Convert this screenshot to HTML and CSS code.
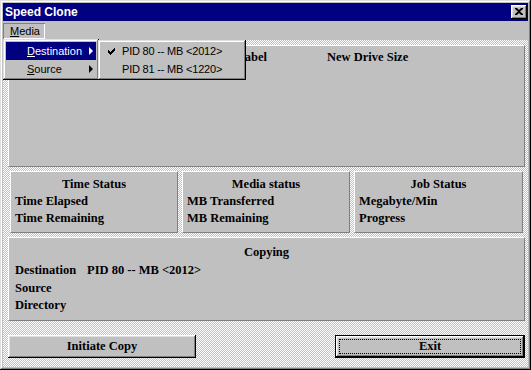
FILE: index.html
```html
<!DOCTYPE html>
<html>
<head>
<meta charset="utf-8">
<link rel="stylesheet" href="styles.css">
</head>
<body>
<div class="window">
  <div class="titlebar">
    <span class="title">Speed Clone</span>
    <span class="close-btn"><svg width="8" height="7" viewBox="0 0 8 7"><path d="M0 0h2l2 2 2-2h2v1L5 3.5 8 6v1H6L4 5 2 7H0V6l3-2.5L0 1z" fill="#000"/></svg></span>
  </div>
  <div class="menubar">
    <span class="menu-top pressed"><u>M</u>edia</span>
  </div>
  <div class="client">
    <div class="panel drives">
      <div class="drive-header">
        <span class="col-label">Label</span>
        <span class="col-size">New Drive Size</span>
      </div>
    </div>
    <div class="status-row">
      <div class="panel status">
        <div class="heading">Time Status</div>
        <div class="line">Time Elapsed</div>
        <div class="line">Time Remaining</div>
      </div>
      <div class="panel status">
        <div class="heading">Media status</div>
        <div class="line">MB Transferred</div>
        <div class="line">MB Remaining</div>
      </div>
      <div class="panel status wide">
        <div class="heading">Job Status</div>
        <div class="line">Megabyte/Min</div>
        <div class="line">Progress</div>
      </div>
    </div>
    <div class="panel copying">
      <div class="heading">Copying</div>
      <div class="line"><span class="key">Destination</span><span>PID 80 -- MB &lt;2012&gt;</span></div>
      <div class="line">Source</div>
      <div class="line">Directory</div>
    </div>
    <div class="buttons">
      <button class="btn initiate">Initiate Copy</button>
      <button class="btn default"><span class="focus">Exit</span></button>
    </div>
  </div>

  <div class="popup menu-main">
    <div class="item selected"><span class="label"><u>D</u>estination</span><span class="arrow"></span></div>
    <div class="item"><span class="label"><u>S</u>ource</span><span class="arrow"></span></div>
  </div>
  <div class="popup menu-sub">
    <div class="item"><span class="check"><svg width="7" height="7" viewBox="0 0 7 7"><path d="M0 2h1v1h1v1h1V3h1V2h1V1h1V0h1v3H6v1H5v1H4v1H3v1H2V6H1V5H0z" fill="#000"/></svg></span><span class="label">PID 80 -- MB &lt;2012&gt;</span></div>
    <div class="item"><span class="check"></span><span class="label">PID 81 -- MB &lt;1220&gt;</span></div>
  </div>
</div>
</body>
</html>
```

FILE: styles.css
```css
html, body {
  margin: 0;
  padding: 0;
}
body {
  width: 531px;
  height: 370px;
  overflow: hidden;
  font-family: "Liberation Sans", Arial, sans-serif;
  background: #c0c0c0;
}
.window {
  position: relative;
  width: 531px;
  height: 370px;
  box-sizing: border-box;
  padding: 3px;
  background: #c0c0c0;
  box-shadow: inset -1px -1px #000, inset 1px 1px #dfdfdf, inset -2px -2px #808080, inset 2px 2px #fff;
  display: flex;
  flex-direction: column;
}
.titlebar {
  height: 18px;
  background: #000080;
  color: #fff;
  display: flex;
  align-items: center;
  justify-content: space-between;
  padding: 0 1px 0 2px;
}
.title {
  font-weight: bold;
  font-size: 12px;
}
.close-btn {
  width: 16px;
  height: 14px;
  box-sizing: border-box;
  background: #c0c0c0;
  box-shadow: inset -1px -1px #000, inset 1px 1px #fff, inset -2px -2px #808080, inset 2px 2px #dfdfdf;
  display: flex;
  align-items: center;
  justify-content: center;
  padding: 0 1px 1px 0;
}
.close-btn svg { display: block; }
.menubar {
  height: 19px;
  display: flex;
  align-items: center;
  font-size: 11px;
}
.menu-top {
  height: 16px;
  padding: 0 5px 0 7px;
  display: flex;
  align-items: center;
  box-sizing: border-box;
}
.menu-top.pressed {
  box-shadow: inset 1px 1px #808080, inset -1px -1px #fff;
}
.client {
  flex: 1;
  background: repeating-conic-gradient(#fff 0 25%, #c0c0c0 0 50%) 0 0 / 2px 2px;
  padding: 5px 3px 9px 5px;
  display: flex;
  flex-direction: column;
  font-family: "Liberation Serif", "Times New Roman", serif;
  font-weight: bold;
  font-size: 12.5px;
  color: #000;
}
.panel {
  background: #c0c0c0;
  box-sizing: border-box;
  border: 1px solid;
  border-color: #fff #808080 #808080 #fff;
}
.drives {
  height: 122px;
  padding-top: 3px;
}
.drive-header {
  display: flex;
  line-height: 17px;
}
.col-label {
  width: 258px;
  text-align: right;
}
.col-size {
  margin-left: 60px;
}
.status-row {
  display: flex;
  gap: 4px;
  margin: 4px 0 0 2px;
}
.status {
  width: 168px;
  height: 62px;
  padding: 4px 4px 0;
}
.status.wide {
  width: 169px;
}
.heading {
  text-align: center;
  line-height: 17px;
}
.line {
  line-height: 17px;
  white-space: nowrap;
}
.copying {
  margin-top: 4px;
  height: 84px;
  padding: 5px 6px 0;
}
.copying .heading {
  line-height: 19px;
}
.copying .line {
  line-height: 17.5px;
}
.key {
  display: inline-block;
  width: 72px;
}
.buttons {
  margin-top: 14px;
  display: flex;
  justify-content: space-between;
}
.btn {
  font: inherit;
  color: #000;
  background: #c0c0c0;
  border: none;
  margin: 0;
  height: 23px;
  padding: 0;
  box-sizing: border-box;
}
.initiate {
  width: 188px;
  box-shadow: inset -1px -1px #000, inset 1px 1px #fff, inset -2px -2px #808080, inset 2px 2px #dfdfdf;
}
.default {
  width: 190px;
  border: 1px solid #000;
  box-shadow: inset -1px -1px #000, inset 1px 1px #fff, inset -2px -2px #808080, inset 2px 2px #dfdfdf;
  padding: 3px;
  display: flex;
}
.focus {
  flex: 1;
  border: 1px dotted #000;
  display: flex;
  align-items: center;
  justify-content: center;
}
.popup {
  position: absolute;
  background: #c0c0c0;
  box-sizing: border-box;
  padding: 3px;
  box-shadow: inset -1px -1px #000, inset 1px 1px #dfdfdf, inset -2px -2px #808080, inset 2px 2px #fff;
  font-size: 11px;
  color: #000;
}
.menu-main {
  left: 3px;
  top: 39px;
  width: 96px;
  height: 41px;
}
.menu-sub {
  left: 98px;
  top: 40px;
  width: 148px;
  height: 40px;
  padding-top: 2px;
}
.item {
  height: 18px;
  display: flex;
  align-items: center;
  position: relative;
}
.menu-main .item .label {
  padding-left: 21px;
  flex: 1;
}
.item.selected {
  background: #000080;
  color: #fff;
}
.arrow {
  width: 0;
  height: 0;
  border-top: 4px solid transparent;
  border-bottom: 4px solid transparent;
  border-left: 4px solid #000;
  margin-right: 3px;
}
.item.selected .arrow {
  border-left-color: #fff;
}
.check {
  width: 21px;
  display: flex;
  justify-content: center;
  padding-right: 1px;
  box-sizing: border-box;
}
.menu-sub .label {
  letter-spacing: -0.2px;
}
```
